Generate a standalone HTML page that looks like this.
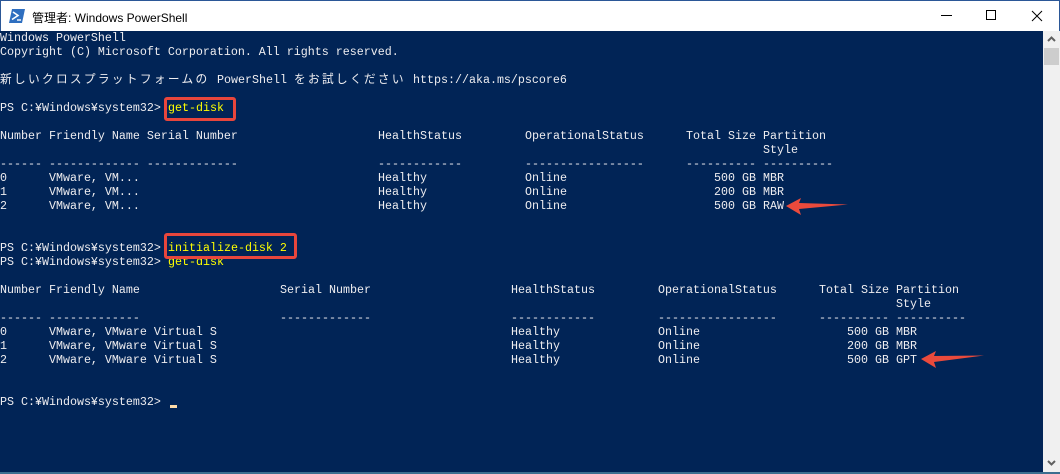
<!DOCTYPE html>
<html><head><meta charset="utf-8"><style>
*{margin:0;padding:0;box-sizing:border-box}
body{width:1060px;height:474px;overflow:hidden;background:#fff;position:relative;font-family:"Liberation Sans","Noto Sans CJK JP",sans-serif}
#title{position:absolute;left:0;top:0;width:1060px;height:31px;background:#fff;border:1px solid #2b5797;border-bottom:none}
#title .t{position:absolute;left:31px;top:8px;font-size:12px;color:#000}
#con{position:absolute;left:0;top:31px;width:1043px;height:441px;background:#012456;overflow:hidden;font-family:"Liberation Mono","Noto Sans CJK JP",monospace;font-size:11.67px;color:#eeedf0}
.l{position:absolute;left:0;height:14px;line-height:14px;white-space:pre;width:1043px}
.l span{position:absolute;top:0}
.y{color:#ffff00}
.j{letter-spacing:2.33px}
#sb{position:absolute;left:1043px;top:31px;width:17px;height:441px;background:#f0f0f0}
#bot{position:absolute;left:0;top:472px;width:1060px;height:2px;background:#3b6e8f}
.box{position:absolute;border:3px solid #e8463c;border-radius:3px}
</style></head><body>
<div id="title">
<svg style="position:absolute;left:8px;top:8px" width="16" height="14" viewBox="0 0 16 14"><path d="M3 0H16L13 14H0Z" fill="#2f6fc0"/><path d="M4 3l5 3.5-6 4" stroke="#fff" stroke-width="1.6" fill="none"/><path d="M8 11h4" stroke="#fff" stroke-width="1.4"/></svg>
<div class="t">管理者: Windows PowerShell</div>
<div style="position:absolute;left:940px;top:14px;width:11px;height:1px;background:#000"></div>
<div style="position:absolute;left:985px;top:9px;width:10px;height:10px;border:1px solid #000"></div>
<svg style="position:absolute;left:1030px;top:9px" width="12" height="12"><path d="M1 1L11 11M11 1L1 11" stroke="#000" stroke-width="1"/></svg>
</div>
<div id="con">
<div class="l" style="top:0">Windows PowerShell</div>
<div class="l" style="top:14px">Copyright (C) Microsoft Corporation. All rights reserved.</div>
<div class="l" style="top:42px"><span style="left:0" class="j">新しいクロスプラットフォームの</span><span style="left:217px">PowerShell</span><span style="left:294px" class="j">をお試しください</span><span style="left:413px">https://aka.ms/pscore6</span></div>
<div class="l" style="top:70px">PS C:¥Windows¥system32&gt; <span class="y" style="left:168px">get-disk</span></div>
<div class="l" style="top:98px"><span style="left:0">Number Friendly Name Serial Number</span><span style="left:378px">HealthStatus</span><span style="left:525px">OperationalStatus</span><span style="left:686px">Total Size</span><span style="left:763px">Partition</span></div>
<div class="l" style="top:112px"><span style="left:763px">Style</span></div>
<div class="l" style="top:126px"><span style="left:0">------ ------------- -------------</span><span style="left:378px">------------</span><span style="left:525px">-----------------</span><span style="left:686px">----------</span><span style="left:763px">----------</span></div>
<div class="l" style="top:140px"><span style="left:0">0      VMware, VM...</span><span style="left:378px">Healthy</span><span style="left:525px">Online</span><span style="left:714px">500 GB MBR</span></div>
<div class="l" style="top:154px"><span style="left:0">1      VMware, VM...</span><span style="left:378px">Healthy</span><span style="left:525px">Online</span><span style="left:714px">200 GB MBR</span></div>
<div class="l" style="top:168px"><span style="left:0">2      VMware, VM...</span><span style="left:378px">Healthy</span><span style="left:525px">Online</span><span style="left:714px">500 GB RAW</span></div>
<div class="l" style="top:210px">PS C:¥Windows¥system32&gt; <span class="y" style="left:168px">initialize-disk 2</span></div>
<div class="l" style="top:224px">PS C:¥Windows¥system32&gt; <span class="y" style="left:168px">get-disk</span></div>
<div class="l" style="top:252px"><span style="left:0">Number Friendly Name</span><span style="left:280px">Serial Number</span><span style="left:511px">HealthStatus</span><span style="left:658px">OperationalStatus</span><span style="left:819px">Total Size</span><span style="left:896px">Partition</span></div>
<div class="l" style="top:266px"><span style="left:896px">Style</span></div>
<div class="l" style="top:280px"><span style="left:0">------ -------------</span><span style="left:280px">-------------</span><span style="left:511px">------------</span><span style="left:658px">-----------------</span><span style="left:819px">----------</span><span style="left:896px">----------</span></div>
<div class="l" style="top:294px"><span style="left:0">0      VMware, VMware Virtual S</span><span style="left:511px">Healthy</span><span style="left:658px">Online</span><span style="left:847px">500 GB MBR</span></div>
<div class="l" style="top:308px"><span style="left:0">1      VMware, VMware Virtual S</span><span style="left:511px">Healthy</span><span style="left:658px">Online</span><span style="left:847px">200 GB MBR</span></div>
<div class="l" style="top:322px"><span style="left:0">2      VMware, VMware Virtual S</span><span style="left:511px">Healthy</span><span style="left:658px">Online</span><span style="left:847px">500 GB GPT</span></div>
<div class="l" style="top:364px">PS C:¥Windows¥system32&gt; </div>
<div style="position:absolute;left:170px;top:374px;width:7px;height:3px;background:#fedba9"></div>
</div>
<div class="box" style="left:164px;top:97px;width:72px;height:24px"></div>
<div class="box" style="left:164px;top:233px;width:133px;height:26px"></div>
<svg style="position:absolute;left:0;top:0" width="1060" height="474">
<path d="M786 206L801 198L799 203L848 204.5L799 209L801 215Z" fill="#ea4a3c"/>
<path d="M921 359L936 351L934 356L984 355.5L934 362L936 368Z" fill="#ea4a3c"/>
</svg>
<div id="sb">
<div style="position:absolute;left:1px;top:17px;width:15px;height:17px;background:#cdcdcd"></div>
<svg style="position:absolute;left:4px;top:5px" width="9" height="6"><path d="M1 5L4.5 1.5L8 5" stroke="#606060" stroke-width="2" fill="none"/></svg>
<svg style="position:absolute;left:4px;top:429px" width="9" height="6"><path d="M1 1L4.5 4.5L8 1" stroke="#606060" stroke-width="2" fill="none"/></svg>
</div>
<div id="bot"></div>
</body></html>
